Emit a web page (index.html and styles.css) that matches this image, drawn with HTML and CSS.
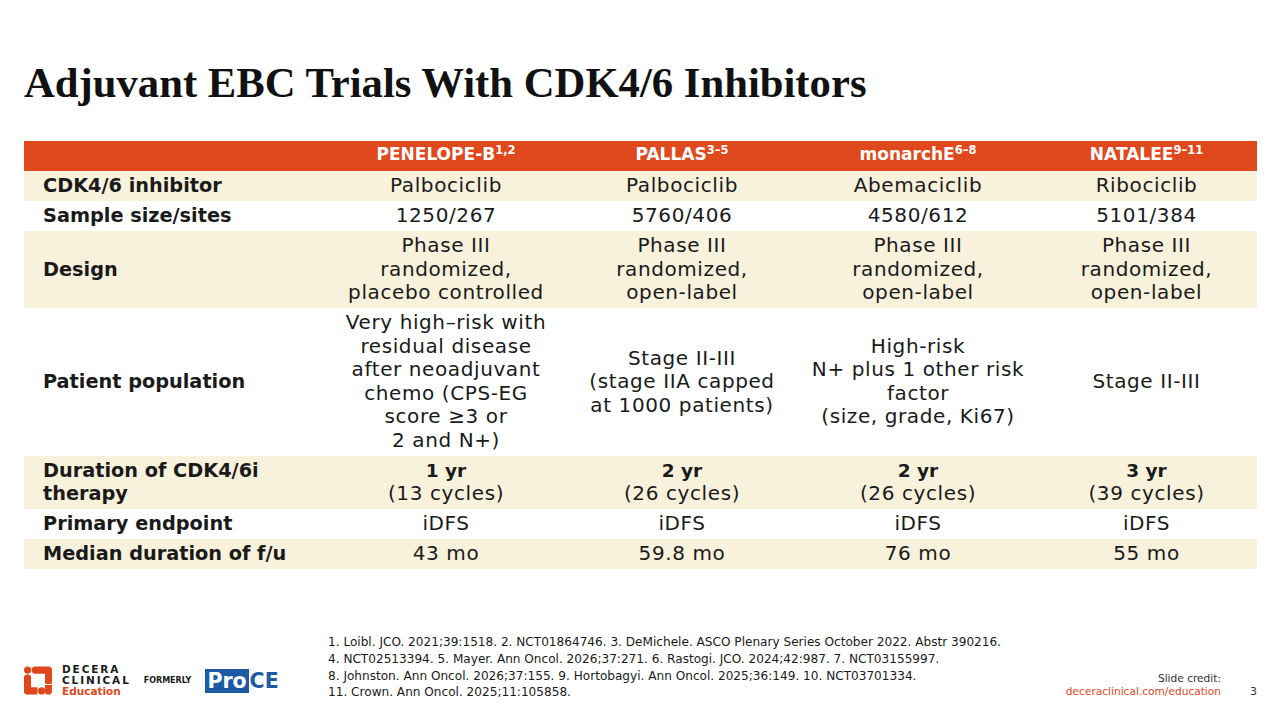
FILE: index.html
```html
<!DOCTYPE html>
<html>
<head>
<meta charset="utf-8">
<link rel="stylesheet" href="styles.css">
</head>
<body>
<div class="slide">
  <h1 class="title">Adjuvant EBC Trials With CDK4/6 Inhibitors</h1>
  <div class="table">
    <div class="row head">
      <div class="cell label"></div>
      <div class="cell">PENELOPE-B<sup>1,2</sup></div>
      <div class="cell">PALLAS<sup>3–5</sup></div>
      <div class="cell">monarchE<sup>6–8</sup></div>
      <div class="cell">NATALEE<sup>9–11</sup></div>
    </div>
    <div class="row cream">
      <div class="cell label">CDK4/6 inhibitor</div>
      <div class="cell">Palbociclib</div>
      <div class="cell">Palbociclib</div>
      <div class="cell">Abemaciclib</div>
      <div class="cell">Ribociclib</div>
    </div>
    <div class="row">
      <div class="cell label">Sample size/sites</div>
      <div class="cell">1250/267</div>
      <div class="cell">5760/406</div>
      <div class="cell">4580/612</div>
      <div class="cell">5101/384</div>
    </div>
    <div class="row cream">
      <div class="cell label">Design</div>
      <div class="cell">Phase III<br>randomized,<br>placebo controlled</div>
      <div class="cell">Phase III<br>randomized,<br>open-label</div>
      <div class="cell">Phase III<br>randomized,<br>open-label</div>
      <div class="cell">Phase III<br>randomized,<br>open-label</div>
    </div>
    <div class="row">
      <div class="cell label">Patient population</div>
      <div class="cell">Very high–risk with<br>residual disease<br>after neoadjuvant<br>chemo (CPS-EG<br>score ≥3 or<br>2 and N+)</div>
      <div class="cell">Stage II-III<br>(stage IIA capped<br>at 1000 patients)</div>
      <div class="cell">High-risk<br>N+ plus 1 other risk<br>factor<br>(size, grade, Ki67)</div>
      <div class="cell">Stage II-III</div>
    </div>
    <div class="row cream">
      <div class="cell label">Duration of CDK4/6i<br>therapy</div>
      <div class="cell"><b>1 yr</b><br>(13 cycles)</div>
      <div class="cell"><b>2 yr</b><br>(26 cycles)</div>
      <div class="cell"><b>2 yr</b><br>(26 cycles)</div>
      <div class="cell"><b>3 yr</b><br>(39 cycles)</div>
    </div>
    <div class="row">
      <div class="cell label">Primary endpoint</div>
      <div class="cell">iDFS</div>
      <div class="cell">iDFS</div>
      <div class="cell">iDFS</div>
      <div class="cell">iDFS</div>
    </div>
    <div class="row cream">
      <div class="cell label">Median duration of f/u</div>
      <div class="cell">43 mo</div>
      <div class="cell">59.8 mo</div>
      <div class="cell">76 mo</div>
      <div class="cell">55 mo</div>
    </div>
  </div>

  <div class="footer">
    <div class="logos">
      <svg class="mark" viewBox="0 0 28 28" width="28" height="29">
        <g fill="#e0481b">
          <circle cx="3.6" cy="3.6" r="3.6"/>
          <rect x="7.6" y="0" width="20.4" height="7.2" rx="3.6"/>
          <rect x="21" y="3" width="7" height="14.5" rx="1.5"/>
          <rect x="0" y="8" width="7" height="20" rx="3"/>
          <rect x="3" y="20.8" width="10.5" height="7.2" rx="1"/>
          <circle cx="17.6" cy="24.4" r="3.6"/>
          <circle cx="24.4" cy="24.4" r="3.6"/>
          <rect x="21" y="18.5" width="7" height="4" />
        </g>
      </svg>
      <div class="decera">
        <span class="dl">DECERA</span>
        <span class="dl">CLINICAL</span>
        <span class="edu">Education</span>
      </div>
      <span class="formerly">FORMERLY</span>
      <div class="proce"><span class="pro">Pro</span><span class="ce">CE</span></div>
    </div>
    <div class="refs">
      1. Loibl. JCO. 2021;39:1518. 2. NCT01864746. 3. DeMichele. ASCO Plenary Series October 2022. Abstr 390216.<br>
      4. NCT02513394. 5. Mayer. Ann Oncol. 2026;37:271. 6. Rastogi. JCO. 2024;42:987. 7. NCT03155997.<br>
      8. Johnston. Ann Oncol. 2026;37:155. 9. Hortobagyi. Ann Oncol. 2025;36:149. 10. NCT03701334.<br>
      11. Crown. Ann Oncol. 2025;11:105858.
    </div>
    <div class="credit">
      <span>Slide credit:</span>
      <span class="link">deceraclinical.com/education</span>
    </div>
    <div class="pagenum">3</div>
  </div>
</div>
</body>
</html>
```

FILE: styles.css
```css
* { box-sizing: border-box; }
html, body { margin: 0; padding: 0; }
body {
  width: 1280px;
  height: 720px;
  background: #ffffff;
  font-family: "DejaVu Sans", "Open Sans", sans-serif;
  color: #1a1a1a;
}
.slide {
  width: 1280px;
  height: 720px;
  display: flex;
  flex-direction: column;
  padding: 59px 23px 0 24px;
}
.title {
  margin: 0;
  font-family: "Liberation Serif", "Times New Roman", serif;
  font-weight: bold;
  font-size: 42.7px;
  line-height: 48px;
  color: #111;
}
.table {
  margin-top: 34px;
  width: 1233px;
}
.row {
  display: grid;
  grid-template-columns: 304px 236px 236px 236px 221px;
  align-items: center;
  font-size: 20px;
  letter-spacing: 0.6px;
  line-height: 23.5px;
}
.row.cream { background: #f8f1dc; }
.row.head {
  background: #e0481e;
  color: #ffffff;
  font-weight: 700;
  font-size: 17px;
  letter-spacing: 0;
}
.head .cell { padding-top: 2px; padding-bottom: 4.5px; }
.head sup {
  font-size: 11.5px;
  line-height: 0;
  vertical-align: 6px;
  margin-left: 0;
}
.cell {
  text-align: center;
  padding: 3.25px 4px;
}
.cell b { font-weight: 700; font-size: 18.5px; letter-spacing: 0; }
.cell.label {
  text-align: left;
  padding-left: 19px;
  font-weight: 700;
  font-size: 19.3px;
  letter-spacing: 0;
}
.footer {
  margin-top: auto;
  display: flex;
  align-items: flex-end;
  padding-bottom: 22px;
}
.logos {
  width: 304px;
  display: flex;
  align-items: center;
  padding-bottom: 1px;
}
.mark { display: block; flex: none; }
.decera {
  display: flex;
  flex-direction: column;
  margin-left: 10px;
  font-family: "DejaVu Sans", Arial, sans-serif;
  line-height: 11px;
}
.dl {
  font-size: 10.5px;
  font-weight: 700;
  letter-spacing: 1.9px;
  color: #1a1a1a;
}
.edu {
  font-size: 10.5px;
  font-weight: 700;
  color: #e0481b;
}
.formerly {
  margin-left: 13px;
  font-family: "DejaVu Sans", Arial, sans-serif;
  font-size: 8px;
  font-weight: 700;
  color: #1a1a1a;
}
.proce {
  margin-left: 14px;
  display: flex;
  align-items: center;
  font-family: "DejaVu Sans", Arial, sans-serif;
  font-weight: 700;
  font-size: 20.5px;
}
.pro {
  background: #1d5aa6;
  color: #fff;
  padding: 0 2px 0 2px;
  line-height: 24px;
  height: 24px;
}
.ce {
  color: #1d5aa6;
  margin-left: 1px;
}
.refs {
  flex: 1;
  font-size: 12.1px;
  line-height: 16.7px;
  color: #1a1a1a;
  margin-bottom: -3px;
}
.credit {
  display: flex;
  flex-direction: column;
  align-items: flex-end;
  font-size: 10.6px;
  line-height: 13px;
  color: #333;
}
.credit .link { color: #e0481b; }
.pagenum {
  width: 36px;
  text-align: right;
  font-size: 11px;
  line-height: 13px;
  color: #333;
}
```
